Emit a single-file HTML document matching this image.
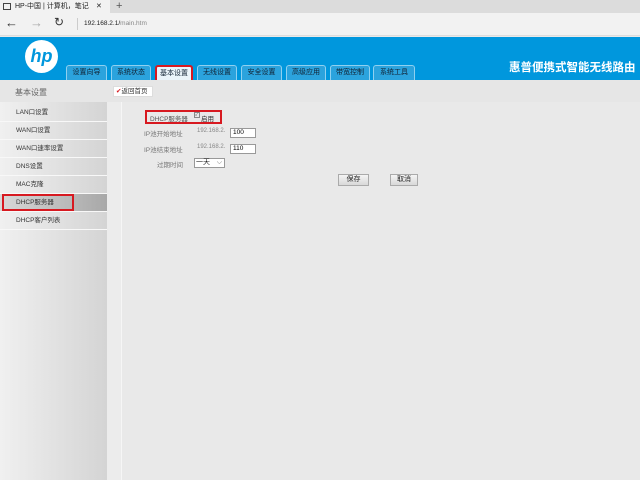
<!DOCTYPE html>
<html><head><meta charset="utf-8"><style>
*{margin:0;padding:0;box-sizing:border-box}
body{width:640px;height:480px;overflow:hidden;font-family:"Liberation Sans","Noto Sans CJK SC",sans-serif;background:#e9e9e9;position:relative;font-size:7px;color:#555}
.a{position:absolute}
.tab{position:absolute;top:65px;height:15px;background:#2ba3dd;border:1px solid #8fd0f0;border-bottom:none;border-radius:3px 3px 0 0;color:#123;font-size:7px;text-align:center;line-height:14px}
.si{position:absolute;left:0;width:107px;height:18px;border-bottom:1px solid #f8f8f8;padding-left:16px;line-height:18px;font-size:6.5px;color:#333}
.inp{position:absolute;width:26px;height:10px;border:1px solid #999;background:#fff;font-size:6.5px;color:#000;padding-left:2px;line-height:8px}
.btn{position:absolute;height:12px;background:linear-gradient(#f4f4f4,#d8d8d8);border:1px solid #aaa;font-size:7px;color:#222;text-align:center;line-height:10px}
</style></head><body>
<div class="a" style="left:0;top:0;width:640px;height:13px;background:#dcdcdc"></div>
<div class="a" style="left:0;top:0;width:110px;height:13px;background:#f2f2f2;font-size:7px;line-height:13px;padding-left:15px;color:#222">HP-中国 | 计算机，笔记 <span style="position:absolute;left:96px">✕</span></div>
<div class="a" style="left:3px;top:3px;width:8px;height:7px;border:1px solid #444"></div>
<div class="a" style="left:116px;top:0;font-size:11px;line-height:13px;color:#555">+</div>
<div class="a" style="left:0;top:13px;width:640px;height:23px;background:#f2f2f2;border-bottom:1px solid #ddd"></div>
<div class="a" style="left:5px;top:15px;font-size:13px;color:#333">←</div>
<div class="a" style="left:30px;top:15px;font-size:13px;color:#aaa">→</div>
<div class="a" style="left:54px;top:15px;font-size:12px;color:#333">↻</div>
<div class="a" style="left:77px;top:18px;width:1px;height:12px;background:#ccc"></div>
<div class="a" style="left:84px;top:20px;font-size:6.5px;color:#222">192.168.2.1/<span style="color:#888">main.htm</span></div>
<div class="a" style="left:0;top:37px;width:640px;height:43px;background:#0097dd"></div>
<div class="a" style="left:25px;top:40px;width:33px;height:33px;border-radius:50%;background:#fff;color:#0097dd;font:italic bold 18px 'Liberation Sans',sans-serif;text-align:center;line-height:32px">hp</div>
<div class="tab" style="left:66px;width:41px">设置向导</div>
<div class="tab" style="left:111px;width:40px">系统状态</div>
<div class="tab" style="left:155px;width:38px;background:#eaf4fa;border:2px solid #d71920;border-bottom:none">基本设置</div>
<div class="tab" style="left:197px;width:40px">无线设置</div>
<div class="tab" style="left:241px;width:41px">安全设置</div>
<div class="tab" style="left:286px;width:40px">高级应用</div>
<div class="tab" style="left:330px;width:40px">带宽控制</div>
<div class="tab" style="left:373px;width:42px">系统工具</div>
<div class="a" style="left:509px;top:59px;font-size:11.5px;font-weight:bold;color:#fff;white-space:nowrap">惠普便携式智能无线路由</div>
<div class="a" style="left:0;top:80px;width:640px;height:22px;background:#e6e6e6"></div>
<div class="a" style="left:15px;top:87px;font-size:8px;color:#666">基本设置</div>
<div class="a" style="left:113px;top:86px;width:40px;height:11px;background:#fff;border:1px solid #ddd;font-size:6.5px;line-height:9px;padding-left:2px;color:#333"><span style="color:#d71920">✔</span>返回首页</div>
<div class="a" style="left:0;top:102px;width:107px;height:378px;background:linear-gradient(90deg,#f0f0f0,#d4d4d4)"></div>
<div class="a" style="left:107px;top:102px;width:15px;height:378px;background:#ececec"></div>
<div class="a" style="left:121px;top:102px;width:519px;height:378px;background:#e9e9e9;border-left:1px solid #f6f6f6"></div>
<div class="si" style="top:104px">LAN口设置</div>
<div class="si" style="top:122px">WAN口设置</div>
<div class="si" style="top:140px">WAN口速率设置</div>
<div class="si" style="top:158px">DNS设置</div>
<div class="si" style="top:176px">MAC克隆</div>
<div class="si" style="top:194px;background:linear-gradient(90deg,#d8d8d8,#a8a8a8)">DHCP服务器</div>
<div class="a" style="left:2px;top:194px;width:72px;height:17px;border:2px solid #d71920"></div>
<div class="si" style="top:212px">DHCP客户列表</div>
<div class="a" style="left:145px;top:110px;width:77px;height:14px;border:2px solid #d71920"></div>
<div class="a" style="left:150px;top:113px;font-size:6.5px">DHCP服务器</div>
<div class="a" style="left:194px;top:112px;width:6px;height:6px;border:1px solid #888;font-size:5px;line-height:5px">✓</div>
<div class="a" style="left:201px;top:113px;font-size:6.5px;color:#333">启用</div>
<div class="a" style="left:144px;top:128px;font-size:6.5px;color:#777">IP池开始地址</div>
<div class="a" style="left:197px;top:128px;font-size:6px;color:#888">192.168.2.</div>
<div class="inp" style="left:230px;top:128px">100</div>
<div class="a" style="left:144px;top:144px;font-size:6.5px;color:#777">IP池结束地址</div>
<div class="a" style="left:197px;top:144px;font-size:6px;color:#888">192.168.2.</div>
<div class="inp" style="left:230px;top:144px">110</div>
<div class="a" style="left:157px;top:159px;font-size:6.5px;color:#777">过期时间</div>
<div class="a" style="left:194px;top:158px;width:31px;height:10px;border:1px solid #999;background:#fff;font-size:7px;color:#222;line-height:8px;padding-left:1px">一天 <span style="position:absolute;right:2px;color:#666">⌵</span></div>
<div class="btn" style="left:338px;top:174px;width:31px">保存</div>
<div class="btn" style="left:390px;top:174px;width:28px">取消</div>
</body></html>
